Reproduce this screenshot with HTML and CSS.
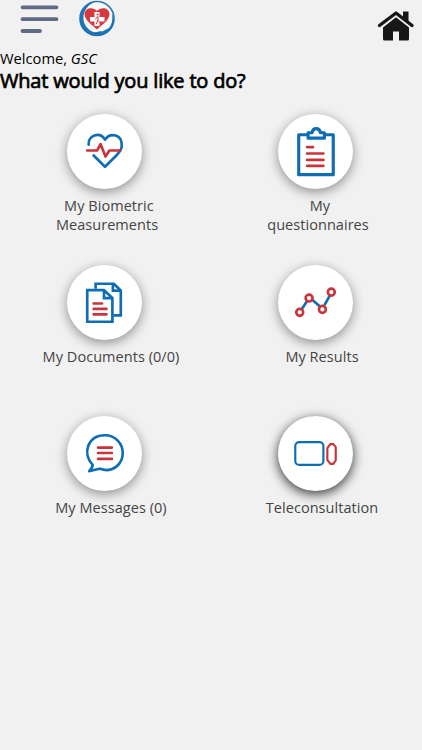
FILE: index.html
```html
<!DOCTYPE html>
<html lang="en">

<head>
    <meta charset="UTF-8" />
    <meta name="viewport" content="width=device-width, initial-scale=1.0" />
    <title>Home</title>
    <link rel="stylesheet" href="styles.css">
</head>

<body>
    <header class="topbar">
        <svg class="menu-icon" width="39" height="28" viewBox="0 0 39 28">
            <path d="M2.500 2.300H36.500M2.500 14.200H36.500M2.500 26H20" />
        </svg>
        <svg class="logo" width="40" height="40" viewBox="0 0.500 40 40">
            <circle cx="20" cy="19" r="17" fill="#f8f8f8" stroke="#2b7bb9" stroke-width="1.7" />
            <path d="M5 28C-1 15 7 3 20 1.500C9 5 4 15 7.500 24C11 32 20 36 31 32.500C22 39 10 37 5 28Z" fill="#1c73b6" />
            <path d="M17 33C20 33 22 31 25 32L32 28.500C35 25 36 20 35 14C39 22 36 31 28 34.500C23 36 19 35 17 33Z" fill="#1c73b6" />
            <path d="M20 30C16 26 7.500 21 7.500 14.500C8 8 16 7 20 11.500C24 7 32 8 32.500 14.500C32.500 21 24 26 20 30Z" fill="#d7383f" />
            <path d="M17.500 12.500H22.500V17.500H27.500V22H22.500V26.500H17.500V22H13V17.500H17.500Z" fill="#fff" />
            <circle cx="20.500" cy="15" r="1" fill="#d7383f" />
            <path d="M18 20L21 17V21L23 23M21 20L19 25" fill="none" stroke="#d7383f" stroke-width="1" />
        </svg>
        <svg class="home-icon" width="38" height="32" viewBox="0 0 38 32">
            <path d="M2.500 15.500L19 3L35 15.500" fill="none" stroke="#171717" stroke-width="3.400" stroke-linecap="round" stroke-linejoin="round" />
            <path d="M26 1.500H31.500V12L26 8Z" fill="#171717" />
            <path d="M19 7.300L32 17.500V29Q32 30.500 30.500 30.500H22V21.500H16V30.500H7.500Q6 30.500 6 29V17.500Z" fill="#171717" />
        </svg>
    </header>

    <p class="welcome">Welcome, <i>GSC</i></p>
    <h1>What would you like to do?</h1>

    <main class="menu">
        <a class="item">
            <span class="circle">
                <svg viewBox="0 0 76 76">
                    <path class="blue" d="M22 31C21 22 33 17 38.500 26C44 18 56 21 55.500 32C55.500 36 53 39 50 42L38.500 53.500L27 42" />
                    <path class="red" d="M20.500 37H30.500L34 30.500L39 43L43 37H54" />
                </svg>
            </span>
            <span class="label two-lines">&nbsp;My Biometric<br>Measurements</span>
        </a>
        <a class="item">
            <span class="circle">
                <svg viewBox="0 0 76 76">
                    <path class="blue thick" d="M29 21H21V61.500H56V21H48" />
                    <path class="blue thick" d="M30.500 24.500V19H34.500C35.500 13.500 42 13.500 43 19H47V24.500Z" />
                    <path class="red" d="M29.500 33.500H35.500M29.500 40H46M29.500 46.500H46M29.500 52.500H46" />
                </svg>
            </span>
            <span class="label two-lines">&nbsp;My<br>questionnaires</span>
        </a>
        <a class="item">
            <span class="circle">
                <svg viewBox="0 0 76 76">
                    <path class="blue sharp" d="M29 24V19H47.500L54.500 26V51H47M46.500 19V26H54.500" />
                    <path class="blue sharp" d="M20.500 25.500H37.500L46 33.500V57.500H20.500ZM37.500 25.500V33.500H46" />
                    <path class="red" d="M27 39H35.500M27 44.500H40M27 50H40" />
                </svg>
            </span>
            <span class="label">My Documents (0/0)</span>
        </a>
        <a class="item">
            <span class="circle">
                <svg viewBox="0 0 76 76">
                    <path class="blue" d="M24.500 44L29.500 36.500M35 35.500L42.500 42M47.500 40L52.500 31" />
                    <g class="red">
                        <circle cx="22" cy="48" r="3.500" />
                        <circle cx="31.500" cy="33.500" r="3.500" />
                        <circle cx="45" cy="45" r="3.500" />
                        <circle cx="54" cy="27.500" r="3.500" />
                    </g>
                </svg>
            </span>
            <span class="label">My Results</span>
        </a>
        <a class="item">
            <span class="circle">
                <svg viewBox="0 0 76 76">
                    <path class="blue" d="M26 49.500C15 38 21 19.500 38.500 19.500C49 19.500 56.500 28 56.500 37.500C56.500 49 46 58 33.500 53.500Q31 54 22.500 56Q26 52.500 26 49.500Z" />
                    <path class="red" d="M31.500 32H45.500M31.500 37.500H45.500M31.500 43.500H45.500" />
                </svg>
            </span>
            <span class="label">My Messages (0)</span>
        </a>
        <a class="item">
            <span class="circle dark">
                <svg viewBox="0 0 76 76">
                    <rect class="blue thin" x="17.500" y="26.500" width="28.500" height="23" rx="4" />
                    <path class="red thin" d="M50 32.500L53 28.500H56L58.500 31.500V45L56 48.500H53L50 44.500Z" />
                </svg>
            </span>
            <span class="label">Teleconsultation</span>
        </a>
    </main>
</body>

</html>
```
FILE: styles.css
```css
body {
    font-family: "Open Sans", "Noto Sans", sans-serif;
    background-color: #f1f1f1;
    color: #000;
    margin: 0;
    padding: 0;
}

.topbar {
    display: flex;
    align-items: flex-start;
    height: 48px;
}

.menu-icon {
    margin: 5px 0 0 20px;
    fill: none;
    stroke: #5f6b83;
    stroke-width: 3.8;
    stroke-linecap: round;
}

.logo {
    margin-left: 18px;
}

.home-icon {
    margin: 10px 7px 0 auto;
}

.welcome {
    font-size: 14.7px;
    line-height: 20px;
    margin: 0;
}

h1 {
    font-size: 20px;
    font-weight: 400;
    letter-spacing: -0.18px;
    -webkit-text-stroke: 0.7px #000;
    line-height: 26px;
    margin: 0;
}

.menu {
    display: grid;
    grid-template-columns: 1fr 1fr;
    grid-auto-rows: 151px;
    margin-top: 20px;
}

.item {
    display: flex;
    flex-direction: column;
    align-items: center;
}

.circle {
    width: 75px;
    height: 75px;
    margin-right: 2px;
    border-radius: 50%;
    background-color: #fff;
    box-shadow: 0 3px 12px rgba(0, 0, 0, 0.42);
}

.circle.dark {
    box-shadow: 0 3px 12px rgba(0, 0, 0, 0.8);
}

.circle svg {
    display: block;
    width: 75px;
    height: 75px;
}

.blue,
.red {
    fill: none;
    stroke-width: 2.7;
    stroke-linecap: round;
    stroke-linejoin: round;
}

.blue {
    stroke: #0f6db5;
}

.red {
    stroke: #c9343a;
}

.sharp {
    stroke-linecap: butt;
    stroke-linejoin: miter;
}

.thick {
    stroke-width: 3.2;
}

.thin {
    stroke-width: 2.2;
}

.label {
    font-size: 14.5px;
    line-height: 19px;
    letter-spacing: 0.05px;
    color: #444;
    text-align: center;
    margin-top: 7px;
    padding-left: 11px;
}

.label.two-lines {
    padding-left: 3px;
}
```
